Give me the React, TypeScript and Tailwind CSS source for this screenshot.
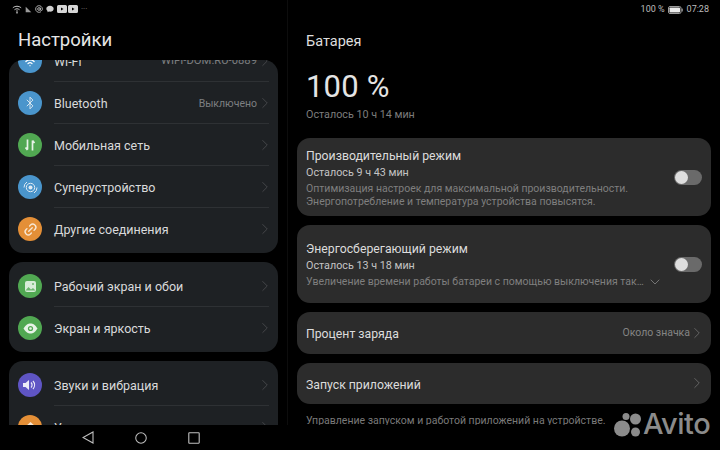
import React from "react";
import { Wifi, Bluetooth, Link2, ChevronRight, ChevronDown } from "lucide-react";

function Circle({ color, children }: { color: string; children?: React.ReactNode }) {
  return (
    <div className={`w-[24px] h-[24px] rounded-full flex items-center justify-center shrink-0 ${color}`}>
      {children}
    </div>
  );
}

function Row({
  icon,
  label,
  value,
  valueClass,
  last,
}: {
  icon: React.ReactNode;
  label: string;
  value?: string;
  valueClass?: string;
  last?: boolean;
}) {
  return (
    <div className="h-[42px] pl-[9px] pr-[9px] flex items-center">
      {icon}
      <div className={`ml-[12px] flex-1 h-full flex items-center ${last ? "" : "border-b border-[#2e3134]"}`}>
        <span className="text-[12.5px] pt-[3px] text-[#d9dadb] flex-1 whitespace-nowrap">{label}</span>
        {value && (
          <span className={`pt-[2px] text-[#7d7f81] whitespace-nowrap ${valueClass ?? "text-[10.5px]"}`}>{value}</span>
        )}
        <ChevronRight className="w-[18px] h-[18px] text-[#484a4d] shrink-0 -ml-[1px] -mr-[5px]" strokeWidth={1.2} />
      </div>
    </div>
  );
}

function Group({ children }: { children: React.ReactNode }) {
  return <div className="bg-[#1e2124] rounded-[14px] py-[3px]">{children}</div>;
}

function Toggle() {
  return (
    <div className="w-[28px] h-[15px] rounded-full bg-[#6a6a6a] p-[1px] shrink-0">
      <div className="w-[13px] h-[13px] rounded-full bg-[#dedede]" />
    </div>
  );
}

function ModeCard({ title, remain, children }: { title: string; remain: string; children: React.ReactNode }) {
  return (
    <div className="bg-[#2c2c2c] rounded-[13px] h-[78px] pl-[9px] pr-[9px] flex items-center">
      <div className="flex-1 min-w-0 pt-[1px]">
        <div className="text-[12.25px] leading-[16px] text-[#dcdcdc]">{title}</div>
        <div className="text-[10.75px] leading-[15px] mt-[1px] text-[#c4c4c4]">{remain}</div>
        <div className="text-[10.5px] leading-[13px] mt-[2px] text-[#7f7f7f]">{children}</div>
      </div>
      <Toggle />
    </div>
  );
}

function SimpleCard({ title, value }: { title: string; value?: string }) {
  return (
    <div className="bg-[#2c2c2c] rounded-[13px] h-[41.5px] pl-[9px] pr-[5px] flex items-center">
      <span className="text-[12.25px] pt-[3px] text-[#dcdcdc] flex-1">{title}</span>
      {value && <span className="text-[10.5px] pt-[1px] text-[#858585]">{value}</span>}
      <ChevronRight className="w-[18px] h-[18px] text-[#6a6a6a] -ml-[2px]" strokeWidth={1.2} />
    </div>
  );
}

export default function App() {
  return (
    <div
      className="relative w-[720px] h-[450px] bg-black overflow-hidden flex flex-col"
      style={{ fontFamily: "Roboto, 'Noto Sans', sans-serif" }}
    >
      <div className="h-[425px] flex">
        {/* Left column */}
        <div className="w-[288px] flex flex-col border-r border-[#0d0d0d]">
          <div className="h-[60px] shrink-0 pl-[12px]">
            <div className="h-[18px] flex items-center gap-[3px] text-[#bdbdbd]">
              <svg width="10" height="9" viewBox="0 0 24 20" fill="none" stroke="#c8c8c8" strokeWidth="2.4">
                <path d="M2 6c6-5 14-5 20 0M6 10.5c4-3 8-3 12 0M9.5 14.5c2-1.5 3-1.5 5 0" />
                <circle cx="12" cy="18" r="1" fill="#c8c8c8" />
              </svg>
              <svg width="7" height="7" viewBox="0 0 10 10" fill="#9a9a9a"><path d="M1 1l8 8H1z" /></svg>
              <svg width="8" height="8" viewBox="0 0 24 24" fill="none" stroke="#c4c4c4" strokeWidth="2.6">
                <circle cx="12" cy="12" r="4" />
                <path d="M16 8v5.500a3 3 0 0 0 6 0V12a10 10 0 1 0-4 8" />
              </svg>
              <svg width="8" height="8" viewBox="0 0 24 24" fill="#d0d0d0"><path d="M12 2C5.500 2 1 6 1 11c0 3 2 5.500 4 7l-1 4 5-2.500c1 .3 2 .5 3 .5 6.500 0 11-4 11-9S18.500 2 12 2z" /></svg>
              <svg width="10" height="8" viewBox="0 0 20 16" fill="#d6d6d6"><path fillRule="evenodd" d="M3 0h14a3 3 0 0 1 3 3v10a3 3 0 0 1-3 3H3a3 3 0 0 1-3-3V3a3 3 0 0 1 3-3zm5 5v6l5-3z" /></svg>
              <svg width="10" height="8" viewBox="0 0 20 16" fill="#d6d6d6" className="-ml-[2px]"><path fillRule="evenodd" d="M3 0h14a3 3 0 0 1 3 3v10a3 3 0 0 1-3 3H3a3 3 0 0 1-3-3V3a3 3 0 0 1 3-3zm5 5v6l5-3z" /></svg>
              <span className="text-[8px] leading-none text-[#8a8a8a]">···</span>
            </div>
            <div className="ml-[6px] mt-[10px] text-[18.5px] leading-[24px] text-[#e6e6e6]">Настройки</div>
          </div>
          <div className="mx-[9px] flex-1 overflow-hidden rounded-t-[14px]">
            <div className="-mt-[23px] flex flex-col gap-[9px]">
              <Group>
                <Row
                  icon={<Circle color="bg-[#4a95cc]"><Wifi className="w-[14px] h-[14px] text-white" strokeWidth={2.2} /></Circle>}
                  label="Wi-Fi"
                  value="WIFI-DOM.RU-0889"
                  valueClass="text-[11.25px]"
                />
                <Row
                  icon={<Circle color="bg-[#4a95cc]"><Bluetooth className="w-[14px] h-[14px] text-[#dfe9f1]" strokeWidth={1.6} /></Circle>}
                  label="Bluetooth"
                  value="Выключено"
                />
                <Row
                  icon={
                    <Circle color="bg-[#51a852]">
                      <svg width="14" height="14" viewBox="0 0 14 14" fill="none" stroke="#e8f3e8" strokeWidth="1.7">
                        <path d="M4.5 1.5v10M2.5 9.5l2 2.500M9.500 12.500v-10M9.500 2.500l2 2.500" />
                      </svg>
                    </Circle>
                  }
                  label="Мобильная сеть"
                />
                <Row
                  icon={
                    <Circle color="bg-[#4a95cc]">
                      <svg width="17" height="17" viewBox="0 0 17 17" fill="none" stroke="#dfeaf3">
                        <circle cx="8.5" cy="8.5" r="2" fill="#dfeaf3" stroke="none" />
                        <circle cx="8.5" cy="8.5" r="4.2" strokeWidth="1" />
                        <path d="M2 8.5a6.5 6.5 0 0 1 3-5.5M15 8.5a6.5 6.5 0 0 1-3 5.5" strokeWidth="1" />
                      </svg>
                    </Circle>
                  }
                  label="Суперустройство"
                />
                <Row
                  icon={<Circle color="bg-[#e48f37]"><Link2 className="w-[15px] h-[15px] text-[#f8e7d3] -rotate-45" strokeWidth={2.2} /></Circle>}
                  label="Другие соединения"
                  last
                />
              </Group>
              <Group>
                <Row
                  icon={
                    <Circle color="bg-[#51a852]">
                      <svg width="13" height="13" viewBox="0 0 13 13">
                        <rect x="1" y="1" width="11" height="11" rx="2" fill="#d7ecd7" />
                        <path d="M1.5 10.5l3-3.5 2.5 2.5 2-1.5 2.5 2.500z" fill="#6db56e" />
                        <circle cx="9" cy="4" r="1" fill="#6db56e" />
                      </svg>
                    </Circle>
                  }
                  label="Рабочий экран и обои"
                />
                <Row
                  icon={
                    <Circle color="bg-[#51a852]">
                      <svg width="15" height="11" viewBox="0 0 15 11">
                        <path d="M.5 5.5C3 1.5 5 .5 7.5.5s4.5 1 7 5c-2.5 4-4.5 5-7 5s-4.5-1-7-5z" fill="#e8f3e8" />
                        <circle cx="7.5" cy="5.5" r="2.6" fill="#51a852" />
                        <circle cx="7.5" cy="5.5" r="1.3" fill="#e8f3e8" />
                      </svg>
                    </Circle>
                  }
                  label="Экран и яркость"
                  last
                />
              </Group>
              <Group>
                <Row
                  icon={
                    <Circle color="bg-[#5f55c4]">
                      <svg width="16" height="14" viewBox="0 0 16 14" fill="none">
                        <path d="M1 5h2.5L7 2v10L3.5 9H1z" fill="#ecebf8" />
                        <path d="M9 4.5a3.5 3.5 0 0 1 0 5M11 3a6 6 0 0 1 0 8" stroke="#ecebf8" strokeWidth="1.2" />
                      </svg>
                    </Circle>
                  }
                  label="Звуки и вибрация"
                />
                <Row
                  icon={
                    <Circle color="bg-[#e48f37]">
                      <svg width="13" height="13" viewBox="0 0 13 13" fill="#f8e7d3"><path d="M6.5 1L12 6v6H1V6z" /></svg>
                    </Circle>
                  }
                  label="Уведомления"
                  last
                />
              </Group>
            </div>
          </div>
        </div>

        {/* Right column */}
        <div className="flex-1 flex flex-col pl-[9px] pr-[9px] overflow-hidden">
          <div className="h-[18px] shrink-0 flex items-center justify-end gap-[2px] pt-[2px] pr-[2px] text-[9px] text-[#bdbdbd]">
            <span>100 %</span>
            <svg width="15" height="8" viewBox="0 0 15 8" className="ml-[1px]">
              <rect x=".5" y=".5" width="12.5" height="7" rx="1.5" fill="none" stroke="#9c9c9c" />
              <rect x="1.5" y="1.5" width="10.5" height="5" rx=".7" fill="#ececec" />
              <rect x="13.5" y="2.5" width="1.3" height="3" rx=".5" fill="#9c9c9c" />
            </svg>
            <span className="ml-[2px]">07:28</span>
          </div>
          <div className="pl-[9px] mt-[15px] text-[14.5px] leading-[18px] text-[#dedede]">Батарея</div>
          <div className="pl-[9px] mt-[18px] text-[31px] leading-[36px] text-[#e4e4e4] tracking-[0.2px]">100 %</div>
          <div className="pl-[9px] mt-[2px] text-[10.75px] leading-[16px] text-[#7d7d7d]">Осталось 10 ч 14 мин</div>
          <div className="mt-[15px] flex flex-col gap-[9px]">
            <ModeCard title="Производительный режим" remain="Осталось 9 ч 43 мин">
              Оптимизация настроек для максимальной производительности.
              <br />
              Энергопотребление и температура устройства повысятся.
            </ModeCard>
            <ModeCard title="Энергосберегающий режим" remain="Осталось 13 ч 18 мин">
              <span className="flex items-center">
                Увеличение времени работы батареи с помощью выключения так…
                <ChevronDown className="w-[16px] h-[16px] ml-[3px] -my-[2px] text-[#7f7f7f]" strokeWidth={1.3} />
              </span>
            </ModeCard>
            <SimpleCard title="Процент заряда" value="Около значка" />
            <SimpleCard title="Запуск приложений" />
          </div>
          <div className="pl-[9px] mt-[10px] text-[10.5px] leading-[14px] text-[#7a7a7a] whitespace-nowrap">
            Управление запуском и работой приложений на устройстве.
          </div>
        </div>
      </div>

      {/* Nav bar */}
      <div className="h-[25px] bg-black relative z-10 flex items-center pl-[82px] gap-[41px]">
        <svg width="12" height="13" viewBox="0 0 12 13" fill="none" stroke="#c0c0c0" strokeWidth="1.1"><path d="M11 1v11L1 6.5z" /></svg>
        <svg width="12" height="12" viewBox="0 0 13 13" fill="none" stroke="#c0c0c0" strokeWidth="1.1"><circle cx="6.5" cy="6.5" r="5.7" /></svg>
        <svg width="12" height="12" viewBox="0 0 12 12" fill="none" stroke="#c0c0c0" strokeWidth="1.1"><rect x=".8" y=".8" width="10.4" height="10.4" rx=".6" /></svg>
      </div>

      {/* Watermark */}
      <div className="absolute left-[614px] top-[411px] z-20 flex items-center gap-[2px] text-[#8b8b8b]">
        <svg width="27" height="25" viewBox="0 0 27 25" fill="#8b8b8b">
          <circle cx="8" cy="16.5" r="8" />
          <circle cx="21.5" cy="20" r="4.5" />
          <circle cx="12" cy="4.5" r="3.5" />
          <circle cx="21.5" cy="7" r="5.5" />
        </svg>
        <span className="text-[29px] leading-[26px] font-medium tracking-[-0.5px]" style={{ fontFamily: "Inter, sans-serif" }}>
          Avito
        </span>
      </div>
    </div>
  );
}
